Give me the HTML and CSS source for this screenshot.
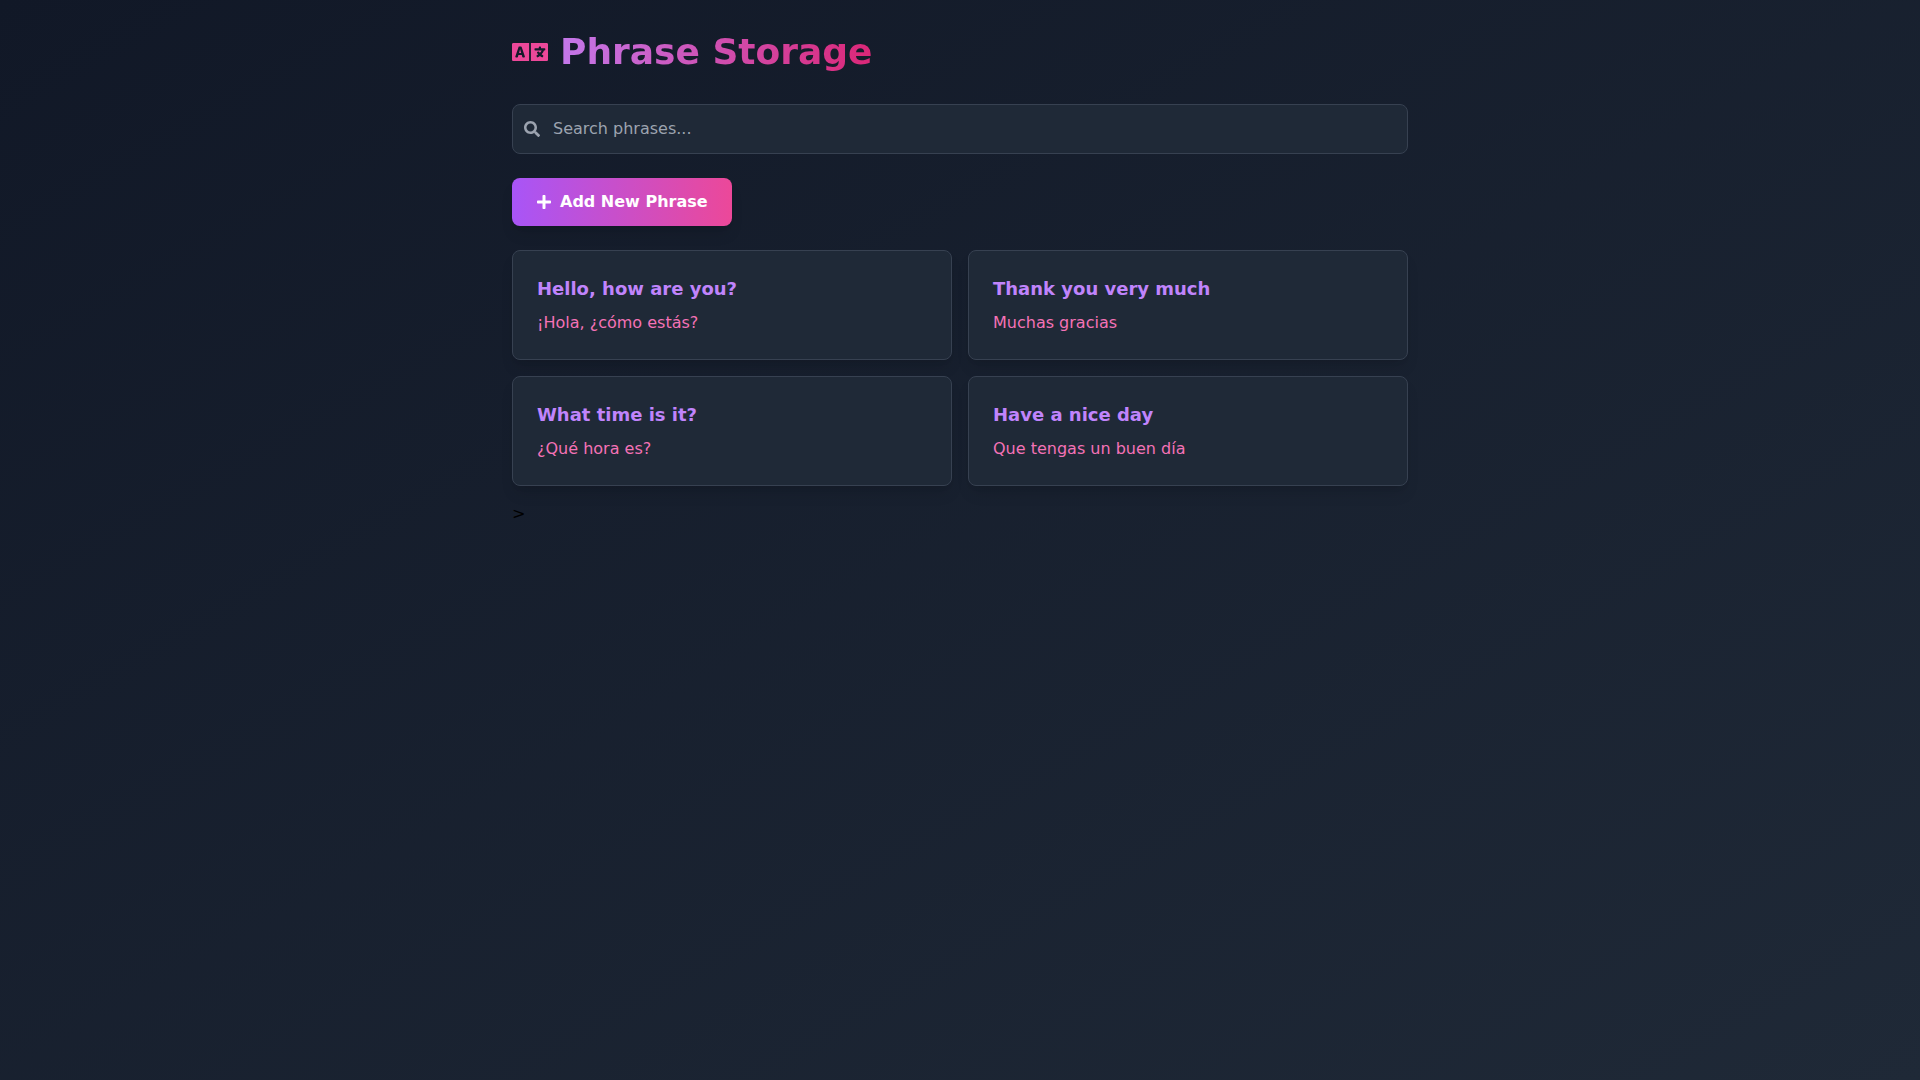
FILE: index.html
```html
<!DOCTYPE html>
<html lang="en">
<head>
<meta charset="utf-8">
<meta name="viewport" content="width=device-width, initial-scale=1">
<title>Phrase Storage</title>
<link rel="stylesheet" href="styles.css">
</head>
<body>
<main class="page">
  <header class="header">
    <h1 class="title">
      <svg class="logo" viewBox="0 96 640 320" aria-hidden="true"><path d="M152.1 236.2c-3.5-12.1-7.8-33.2-7.8-33.2h-.5s-4.3 21.1-7.8 33.2l-11.1 37.5H163zM616 96H336v320h280c13.3 0 24-10.7 24-24V120c0-13.3-10.7-24-24-24zm-24 120c0 6.6-5.4 12-12 12h-11.4c-6.9 23.6-21.7 47.4-42.7 69.9 8.4 6.4 17.1 12.5 26.1 18 5.5 3.4 7.3 10.5 4.1 16.2l-7.9 13.9c-3.4 5.9-10.9 7.8-16.7 4.3-12.6-7.8-24.5-16.1-35.4-24.9-10.9 8.7-22.7 17.1-35.4 24.9-5.8 3.5-13.3 1.6-16.7-4.3l-7.9-13.9c-3.2-5.6-1.4-12.8 4.2-16.2 9.3-5.7 18-11.7 26.1-18-7.9-8.4-14.9-17-21-25.7-4-5.7-2.2-13.6 3.7-17.1l6.5-3.9 7.3-4.3c5.4-3.2 12.4-1.7 16 3.4 5 7 10.8 14 17.4 20.9 13.5-14.2 23.8-28.9 30-43.2H412c-6.6 0-12-5.4-12-12v-16c0-6.6 5.4-12 12-12h64v-16c0-6.6 5.4-12 12-12h16c6.6 0 12 5.4 12 12v16h64c6.6 0 12 5.4 12 12zM0 120v272c0 13.3 10.7 24 24 24h280V96H24c-13.3 0-24 10.7-24 24zm58.9 216.1L116.4 167c1.7-4.9 6.2-8.1 11.4-8.1h32.5c5.1 0 9.7 3.3 11.4 8.1l57.5 169.1c2.6 7.8-3.1 15.9-11.4 15.9h-22.9a12 12 0 0 1-11.5-8.6l-9.4-31.9h-60.2l-9.1 31.8c-1.5 5.1-6.2 8.7-11.5 8.7H70.3c-8.2 0-14-8.1-11.4-15.9z"/></svg>
      Phrase Storage
    </h1>
  </header>

  <label class="search">
    <svg class="search-icon" viewBox="0 0 512 512" aria-hidden="true"><path d="M505 442.7L405.3 343c-4.500-4.500-10.600-7-17-7H372c27.600-35.300 44-79.700 44-128C416 93.100 322.900 0 208 0S0 93.100 0 208s93.100 208 208 208c48.300 0 92.700-16.400 128-44v16.300c0 6.400 2.500 12.500 7 17l99.700 99.700c9.400 9.400 24.600 9.400 33.900 0l28.300-28.300c9.400-9.400 9.400-24.600.1-34zM208 336c-70.700 0-128-57.200-128-128 0-70.700 57.200-128 128-128 70.700 0 128 57.200 128 128 0 70.700-57.200 128-128 128z"/></svg>
    <input class="search-input" type="text" placeholder="Search phrases..." aria-label="Search phrases">
  </label>

  <button class="add-button" type="button">
    <svg class="add-icon" viewBox="0 0 448 512" aria-hidden="true"><path d="M416 208H272V64c0-17.670-14.330-32-32-32h-32c-17.670 0-32 14.330-32 32v144H32c-17.670 0-32 14.330-32 32v32c0 17.670 14.330 32 32 32h144v144c0 17.670 14.330 32 32 32h32c17.670 0 32-14.330 32-32V304h144c17.670 0 32-14.330 32-32v-32c0-17.670-14.330-32-32-32z"/></svg>
    Add New Phrase
  </button>

  <section class="phrases" aria-label="Phrases">
    <article class="card">
      <h2 class="phrase">Hello, how are you?</h2>
      <p class="translation" lang="es">¡Hola, ¿cómo estás?</p>
    </article>
    <article class="card">
      <h2 class="phrase">Thank you very much</h2>
      <p class="translation" lang="es">Muchas gracias</p>
    </article>
    <article class="card">
      <h2 class="phrase">What time is it?</h2>
      <p class="translation" lang="es">¿Qué hora es?</p>
    </article>
    <article class="card">
      <h2 class="phrase">Have a nice day</h2>
      <p class="translation" lang="es">Que tengas un buen día</p>
    </article>
  </section>
  <p class="marker">&gt;</p>
</main>
</body>
</html>
```
FILE: styles.css
```css
*,
*::before,
*::after {
  box-sizing: border-box;
}

body {
  margin: 0;
  min-height: 100vh;
  background: linear-gradient(to bottom right, #111827, #1f2937);
  color: #000;
  font-family: "DejaVu Sans", sans-serif;
  font-size: 16px;
  line-height: 24px;
}

h1,
h2,
p {
  margin: 0;
}

svg {
  display: block;
  flex: none;
  fill: currentColor;
}

.page {
  max-width: 960px;
  margin: 0 auto;
  padding: 32px;
}

.header {
  display: flex;
  margin-bottom: 32px;
}

.title {
  display: flex;
  align-items: center;
  gap: 12px;
  background: linear-gradient(to right, #c084fc, #db2777);
  background-clip: text;
  -webkit-background-clip: text;
  color: transparent;
  font-size: 36px;
  line-height: 40px;
  font-weight: 700;
}

.logo {
  width: 36px;
  height: 18px;
  color: #ec4899;
}

.search {
  display: flex;
  align-items: center;
  gap: 13px;
  margin-bottom: 24px;
  padding: 0 11px;
  border: 1px solid #374151;
  border-radius: 8px;
  background: #1f2937;
  color: #9ca3af;
}

.search:focus-within {
  border-color: #a855f7;
}

.search-icon {
  width: 16px;
  height: 16px;
}

.search-input {
  flex: 1;
  min-width: 0;
  height: 48px;
  padding: 0 0 2px;
  border: 0;
  outline: 0;
  background: none;
  color: #f3f4f6;
  font: inherit;
}

.search-input::placeholder {
  color: #9ca3af;
  opacity: 1;
}

.add-button {
  display: flex;
  align-items: center;
  gap: 8px;
  margin-bottom: 24px;
  padding: 12px 24px;
  border: 0;
  border-radius: 8px;
  background: linear-gradient(to right, #a855f7, #ec4899);
  box-shadow: 0 10px 15px -3px rgba(0, 0, 0, 0.1), 0 4px 6px -4px rgba(0, 0, 0, 0.1);
  color: #fff;
  font: inherit;
  font-weight: 600;
  cursor: pointer;
}

.add-icon {
  width: 16px;
  height: 16px;
}

.phrases {
  display: grid;
  grid-template-columns: repeat(auto-fit, minmax(min(100%, 320px), 1fr));
  gap: 16px;
  margin-bottom: 16px;
}

.card {
  padding: 24px;
  border: 1px solid #374151;
  border-radius: 8px;
  background: #1f2937;
  box-shadow: 0 10px 15px -3px rgba(0, 0, 0, 0.1), 0 4px 6px -4px rgba(0, 0, 0, 0.1);
}

.phrase {
  margin-bottom: 8px;
  color: #c084fc;
  font-size: 18px;
  line-height: 28px;
  font-weight: 600;
}

.translation {
  color: #f472b6;
}
```
